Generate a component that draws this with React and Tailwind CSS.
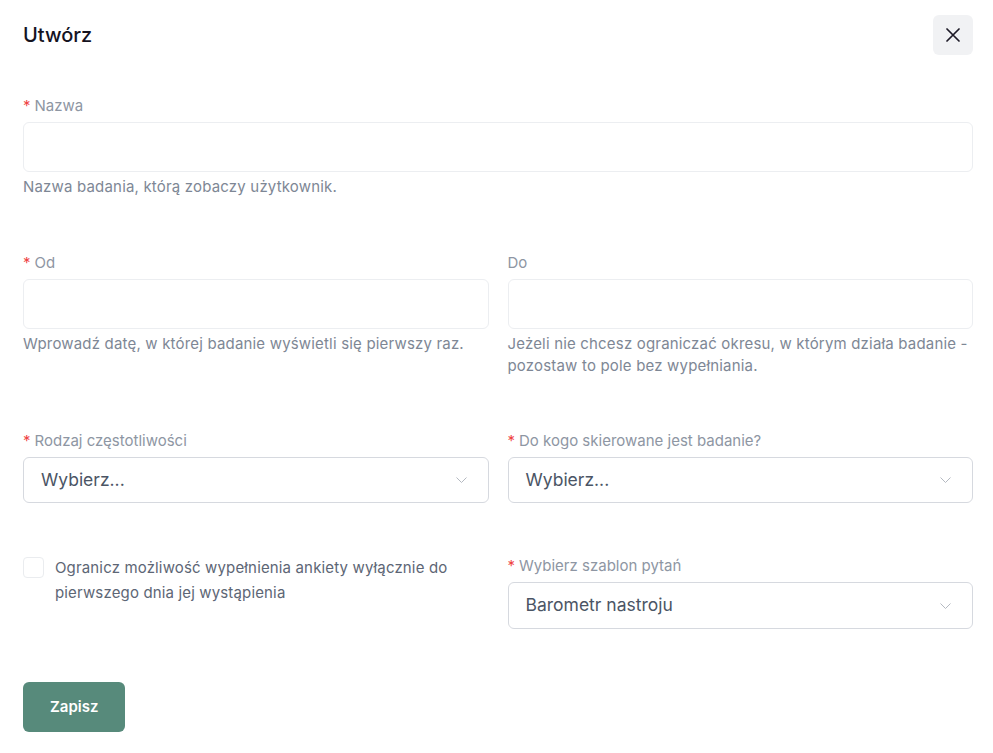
import React from "react";

const Label = ({ children, required }) => (
  <label className="block text-[15px] leading-[21px] text-[#8e96a3] mb-1.5">
    {required && <span className="text-[#ef4444] mr-1">*</span>}
    {children}
  </label>
);

const Help = ({ children }) => (
  <p className="mt-1 text-[15px] leading-[22px] tracking-[0.18px] text-[#7e8795]">{children}</p>
);

const TextInput = () => (
  <input
    type="text"
    className="block w-full h-[50px] rounded-md border border-[#eceef1] bg-white px-4 outline-none"
  />
);

const Select = ({ value, className = "h-[46px]" }) => (
  <div
    className={`flex items-center justify-between w-full rounded-md border border-[#d6d9df] bg-white pl-[17px] pr-[21px] ${className}`}
  >
    <span className="text-[17.5px] text-[#4b5565]">{value}</span>
    <svg width="11" height="6" viewBox="0 0 11 6" fill="none">
      <path d="M0.5 0.5L5.5 5.5L10.5 0.5" stroke="#b4b9c1" strokeWidth="1" />
    </svg>
  </div>
);

export default function App() {
  return (
    <div className="bg-white pl-[23px] pr-[20px] pt-[15px] font-['Inter',sans-serif]">
      {/* Header */}
      <div className="flex items-center justify-between h-10">
        <h1 className="text-[20px] font-medium text-[#15131f]">Utwórz</h1>
        <button className="w-10 h-10 rounded-md bg-[#f1f2f4] flex items-center justify-center">
          <svg width="14" height="14" viewBox="0 0 14 14" fill="none">
            <path d="M1 1L13 13M13 1L1 13" stroke="#1d1a27" strokeWidth="1.7" strokeLinecap="round" />
          </svg>
        </button>
      </div>

      {/* Nazwa */}
      <div className="mt-10">
        <Label required>Nazwa</Label>
        <TextInput />
        <Help>Nazwa badania, którą zobaczy użytkownik.</Help>
      </div>

      {/* Od / Do */}
      <div className="mt-[54px] grid grid-cols-2 gap-[19px]">
        <div>
          <Label required>Od</Label>
          <TextInput />
          <Help>Wprowadź datę, w której badanie wyświetli się pierwszy raz.</Help>
        </div>
        <div>
          <Label>Do</Label>
          <TextInput />
          <Help>
            Jeżeli nie chcesz ograniczać okresu, w którym działa badanie - pozostaw to pole bez
            wypełniania.
          </Help>
        </div>
      </div>

      {/* Selects */}
      <div className="mt-[53px] grid grid-cols-2 gap-[19px]">
        <div>
          <Label required>Rodzaj częstotliwości</Label>
          <Select value="Wybierz..." />
        </div>
        <div>
          <Label required>Do kogo skierowane jest badanie?</Label>
          <Select value="Wybierz..." />
        </div>
      </div>

      {/* Checkbox / template */}
      <div className="mt-[52px] grid grid-cols-2 gap-[19px] items-start">
        <label className="flex items-start gap-[11px]">
          <span className="mt-[2px] w-[21px] h-[21px] shrink-0 rounded-[4px] border border-[#eaecef] bg-white" />
          <span className="text-[15px] leading-[25px] tracking-[0.15px] text-[#5d6675]">
            Ogranicz możliwość wypełnienia ankiety wyłącznie do pierwszego dnia jej wystąpienia
          </span>
        </label>
        <div>
          <Label required>Wybierz szablon pytań</Label>
          <Select value="Barometr nastroju" className="h-[47px]" />
        </div>
      </div>

      {/* Submit */}
      <div className="mt-[53px]">
        <button className="h-[50px] px-[27px] rounded-md bg-[#578a7b] text-white text-[15px] font-semibold">
          Zapisz
        </button>
      </div>
    </div>
  );
}
